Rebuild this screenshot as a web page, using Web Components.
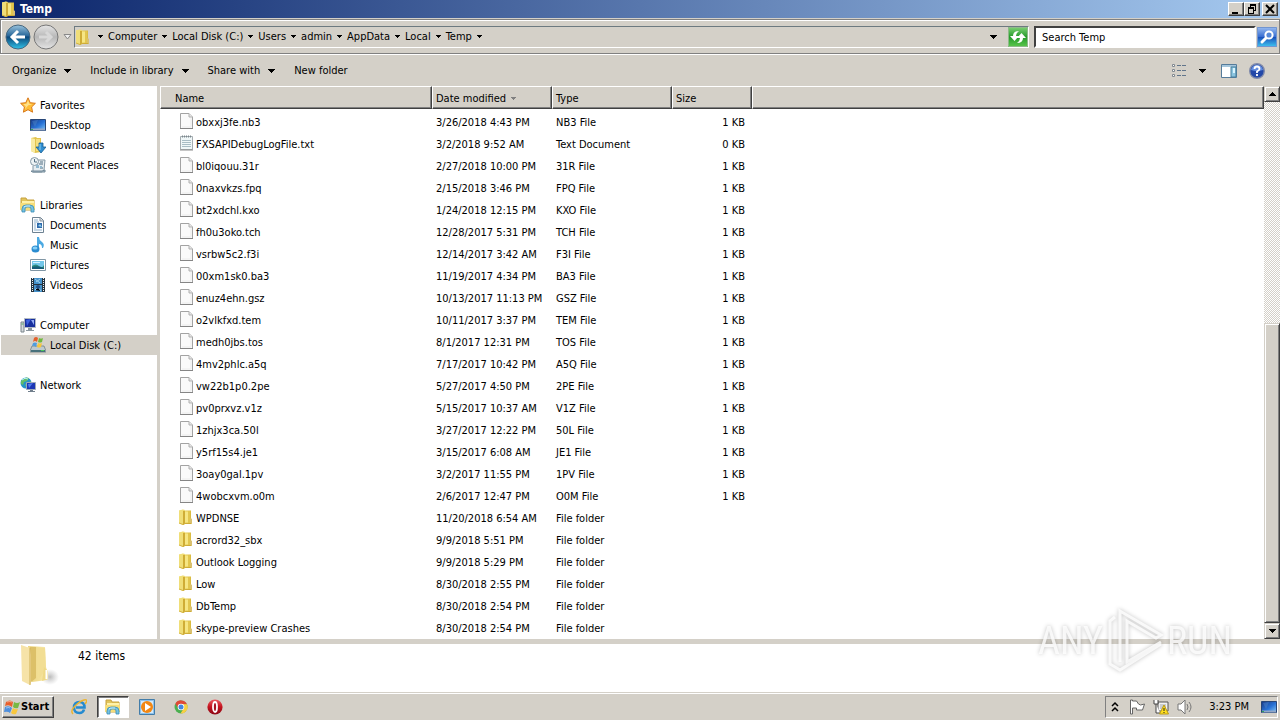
<!DOCTYPE html>
<html lang="en">
<head>
<meta charset="utf-8">
<meta name="viewport" content="width=device-width, initial-scale=1">
<title>Temp</title>
<style>
  :root {
    --face: #d4d0c8;
    --light: #ffffff;
    --shadow: #808080;
    --dark: #404040;
    --text: #000000;
  }
  body {
    margin: 0;
    font: 11px/16px Tahoma, "DejaVu Sans Condensed", "DejaVu Sans", sans-serif;
    color: var(--text);
    background: var(--face);
  }
</style>
</head>
<body>
<explorer-window>
  <title-bar slot="title" icon="folder">Temp</title-bar>
  <address-bar slot="address" path="Computer|Local Disk (C:)|Users|admin|AppData|Local|Temp"></address-bar>
  <command-bar slot="commands"></command-bar>
  <nav-pane slot="nav">
    <nav-group icon="star" label="Favorites">
      <nav-item icon="desktop">Desktop</nav-item>
      <nav-item icon="downloads">Downloads</nav-item>
      <nav-item icon="recent">Recent Places</nav-item>
    </nav-group>
    <nav-group icon="libraries" label="Libraries">
      <nav-item icon="documents">Documents</nav-item>
      <nav-item icon="music">Music</nav-item>
      <nav-item icon="pictures">Pictures</nav-item>
      <nav-item icon="videos">Videos</nav-item>
    </nav-group>
    <nav-group icon="computer" label="Computer">
      <nav-item icon="disk" selected>Local Disk (C:)</nav-item>
    </nav-group>
    <nav-group icon="network" label="Network"></nav-group>
  </nav-pane>
  <file-list slot="files"></file-list>
  <scroll-bar slot="scroll"></scroll-bar>
  <details-pane slot="details">42 items</details-pane>
</explorer-window>
<task-bar></task-bar>
<brand-mark></brand-mark>

<script>
const ICONS = {
  folder: `<defs><linearGradient id="a"><stop stop-color="#f9ec94"/><stop offset=".6" stop-color="#e6cb50"/><stop offset="1" stop-color="#d6b63c"/></linearGradient></defs>
    <path d="M1 1.500l5-1 1 1h6v8l1 1v4l-1 .5H7l-2 1-4-1.500z" fill="url(#a)"/><path d="M1 1.500l4-1v15l-4-1.500z" fill="#f0de78"/><path d="M5 2h2v12l-2 2z" fill="#cfac35"/><path d="M7 2.500h3v11H7z" fill="#f6e684"/><path d="M10 2h2v12h-2z" fill="#e2c64f"/><path d="M12 9l2 1v4l-2 .5z" fill="#d9c070"/><path d="M1 14l4 1.500L7 14.500h6" stroke="#c9a634" fill="none" stroke-width=".8"/>`,
  bigfolder: `<defs><linearGradient id="a"><stop stop-color="#ecd47d"/><stop offset="1" stop-color="#f8e9ac"/></linearGradient><radialGradient id="s"><stop stop-color="#777" stop-opacity=".5"/><stop offset="1" stop-color="#999" stop-opacity="0"/></radialGradient></defs>
    <ellipse cx="30" cy="33" rx="9" ry="8" fill="url(#s)"/><path d="M8 2l17 1 1 20 2 6-1 7-15 2z" fill="url(#a)"/><path d="M10 3h6v31l-6 5z" fill="#dcc068"/><path d="M1 1l9 3 1 7v28l-1 2-8-4z" fill="#f6e3a8"/><path d="M10 4v37" stroke="#cfae52" fill="none"/><path d="M18 4h7l1 21-7 10z" fill="#f2de94"/><path d="M24 23l4 4v8l-6 2z" fill="#efd987"/><path d="M26.500 26v9" stroke="#fff" stroke-width="2"/>`,
  file: `<path d="M2.500.5h8.500l3.500 3.500v11.500h-12z" fill="#fafafa" stroke="#a3a3a3"/><path d="M11 .5v3.500h3.500" fill="#e6e6e6" stroke="#b0b0b0"/><path d="M4 14h9V5" fill="none" stroke="#ececec"/><path d="M2 15.500h13" stroke="#858585"/>`,
  text: `<path d="M2.500 1.500h12v13h-12z" fill="#f0f7f8" stroke="#a5adb1"/><path d="M4 1.500h10" stroke="#7b878d" stroke-width="2" stroke-dasharray="1 1"/><path d="M4 5.500h9M4 7.500h9M4 9.500h9M4 11.500h9" stroke="#a9bdc5"/><path d="M2 15h13" stroke="#8d8d8d"/>`,
  star: `<path d="M8 .8l2.200 4.900 5.200.6-3.800 3.700 1 5.200L8 12.700l-4.600 2.500 1-5.200L.6 6.300l5.200-.6z" fill="#ffbd35" stroke="#d8791c"/><path d="M8 3l1.300 3.800 3 .7-4 .8-3.500 4 1-3-2.600-2 3.400-.5z" fill="#ffe18a"/>`,
  desktop: `<defs><linearGradient id="a" x2="1" y2="1"><stop stop-color="#183783"/><stop offset=".55" stop-color="#2873d7"/><stop offset="1" stop-color="#8ac9f2"/></linearGradient></defs><path d="M.5 2.500h15v11H.5z" fill="url(#a)" stroke="#274677"/><path d="M1 12.500h14" stroke="#93a7c7" stroke-width="2"/><path d="M1 12h2v1H1z" fill="#30a158"/><path d="M2 4l6-1-3 7z" fill="#5087c9" opacity=".45"/>`,
  downloads: `<path d="M1 1l5-1 1 1h4v14l-6 1-4-2z" fill="#e1c34e"/><path d="M1 1l4 1v14l-4-2z" fill="#f9eba4"/><path d="M6 2h4v12H6z" fill="#f5df81"/><path d="M9 6h4v4h3l-5 6-5-6h3z" fill="#318ed1" stroke="#186094" stroke-width=".8"/><path d="M10 7v6" stroke="#8bd1f3"/>`,
  recent: `<path d="M4 3h11l-1 10-2 2H3V9" fill="#e6edf1" stroke="#8397a4"/><path d="M1 14h11l3-1v2H2z" fill="#afc3ce" stroke="#728998"/><circle cx="4.500" cy="4.500" r="4" fill="#edf3f5" stroke="#8799a5"/><path d="M4.500 2v3h2.500M10 5h3M9 7h4M6 10h3M10 11h3" stroke="#536f82" fill="none"/><path d="M6 8h3v3H6zM10 9h2v2h-2z" fill="#93b9cf"/>`,
  libraries: `<path d="M1 3V1h5l1 2h7v10H1z" fill="#e2c45a" stroke="#c6a13e"/><path d="M2 4h12v6H2z" fill="#fff2a8"/><path d="M0 6h15v7H0z" fill="#f6dd79"/><path d="M2 15v-3q0-4 4-4h4q4 0 4 4v3h-3v-3q0-2-2-2H7q-2 0-2 2v3z" fill="#76c2e2" stroke="#378eb7" stroke-width=".8"/><path d="M4 10q1-1 3-1h3" stroke="#d1f4ff" fill="none"/>`,
  documents: `<path d="M2.500.5h8l3 3v12h-11z" fill="#fbfdff" stroke="#6e8292"/><path d="M10 .5v3.500h3" fill="#ddd" stroke="#8594a1"/><path d="M4 3h4M4 5h5M4 7h2M4 9h2M4 11h2M4 13h8" stroke="#8fb1cb"/><path d="M7 6h5v5H7z" fill="#2e6aad"/><path d="M8 9l2-2 2 3z" fill="#91d0ea"/>`,
  music: `<path d="M7 0h2q0 3 3 5t1 6h-1q0-4-3-4v6H7z" fill="#4ba9e2"/><ellipse cx="5.500" cy="12" rx="4" ry="3.500" fill="#2b8cd0"/><ellipse cx="5" cy="11" rx="2.500" ry="1.500" fill="#86d0f7"/>`,
  pictures: `<path d="M.5 2.500h15v11H.5z" fill="#fff" stroke="#8096a5"/><path d="M2 4h12v8H2z" fill="#73c6e9"/><path d="M2 9q4-3 7 0t5-1v4H2z" fill="#2a8c7c"/><path d="M2 10q6-2 12 1v1H2z" fill="#145c78"/><path d="M3 5h7v1H3z" fill="#d3f3ff"/>`,
  videos: `<path d="M1 1h14v14H1z" fill="#26333e"/><path d="M4 1h8v6H4zM4 8h8v7H4z" fill="#4591ca"/><path d="M5 2l5 4M5 13l3-3 3 4M6 5l4-3" stroke="#9fd3ef"/><path d="M2.500 1v14M13.500 1v14" stroke="#edf2f5" stroke-dasharray="1 1"/><circle cx="8" cy="10" r="2" fill="#234f85"/>`,
  computer: `<path d="M1 5h3v10H1z" fill="#d4d9dc" stroke="#7b858b"/><path d="M1.500 7h2" stroke="#51ad66"/><path d="M4.500 1.500h11v9h-11z" fill="#172f9d" stroke="#b2bac4"/><path d="M6 3l5-1-4 7z" fill="#3d61df"/><path d="M11 3h3v5z" fill="#91aaf5"/><path d="M8 11h4v2h2v1H6v-1h2z" fill="#8b969e"/>`,
  disk: `<path d="M2 9h12l2 5v1H0v-1z" fill="#bec9cd" stroke="#65777d" stroke-width=".7"/><path d="M1 13h14v2H1z" fill="#48717b"/><path d="M11 13h3v1h-3z" fill="#4bcc5a"/><path d="M4 1q2-2 4 0L7 5Q5 3 3 5z" fill="#e45f2b"/><path d="M9 1q2 1 4 0l-1 4q-2 1-4 0z" fill="#70b83c"/><path d="M3 6q2-1 4 0l-1 4q-2-2-4-1z" fill="#4d9cdf"/><path d="M8 6q2 1 4 0l-1 4q-2 1-4 0z" fill="#f7c63b"/>`,
  network: `<circle cx="6" cy="6" r="5.500" fill="#2592ca"/><path d="M1 4q4-5 8-3L7 4 4 5 3 8 1 7zM7 6l4-2v5l-4 2-2-3z" fill="#62bd67"/><path d="M2 3q3-3 6-1" stroke="#b9f0fa" fill="none"/><path d="M6.500 5.500h9v7h-9z" fill="#1d37b5" stroke="#9da9b9"/><path d="M8 7l5-1-4 5z" fill="#4f7bed"/><path d="M10 13h3v1h2v1H8v-1h2z" fill="#717f8c"/>`,
  refresh: `<defs><linearGradient id="a" y2="1" x2="0"><stop stop-color="#7fd276"/><stop offset=".5" stop-color="#259a2b"/><stop offset="1" stop-color="#5cc84d"/></linearGradient></defs><path d="M0 0h20v20H0z" fill="url(#a)"/><path d="M.5.5h19v19H.5z" fill="none" stroke="#8fb98a"/><path d="M11 4Q5 4 5 9H2l4.500 5L11 9H8q0-3 3-5zM9 16q6 0 6-5h3l-4.500-5L9 11h3q0 3-3 5z" fill="#fff"/>`,
  search: `<defs><linearGradient id="a" y2="1" x2="0"><stop stop-color="#9cbef1"/><stop offset=".48" stop-color="#386ed2"/><stop offset=".5" stop-color="#194db9"/><stop offset="1" stop-color="#40c8f2"/></linearGradient></defs><path d="M0 0h20v20H0z" fill="url(#a)"/><path d="M.5.5h19v19H.5z" fill="none" stroke="#7295cf"/><path d="M9 11l-4 4" stroke="#fff" stroke-width="3" stroke-linecap="round"/><circle cx="12" cy="8" r="3.600" fill="#5688d8" stroke="#fff" stroke-width="2"/>`,
  view: `<path d="M1.500 1.500h2v2h-2zM1.500 6.500h2v2h-2zM1.500 11.500h2v2h-2z" fill="#fff" stroke="#818990"/><path d="M6 2.500h4M11 2.500h4M6 7.500h4M11 7.500h4M6 12.500h4M11 12.500h4" stroke="#61758b"/>`,
  preview: `<path d="M.5 1.500h15v13H.5z" fill="#fff" stroke="#557b9a"/><path d="M1 2h14v2H1z" fill="#a5c6dc"/><path d="M10 4h5v10h-5z" fill="#8bc4df" stroke="#477e9c"/><path d="M12 5h2v5h-2z" fill="#d9f4ff"/>`,
  help: `<circle cx="8" cy="8" r="7.300" fill="#2348a8" stroke="#808baa" stroke-width="1.400"/><path d="M2 7Q3 2 8 2t6 5Q8 9 2 7z" fill="#658fe0"/><path d="M5.500 6Q5.500 3.500 8 3.500T10.500 6Q10.500 7 8 8.500V10M8 11v2" fill="none" stroke="#fff" stroke-width="1.800"/>`,
  windows: `<path d="M2 3q4-3 7 0L8 8Q5 5 1 7z" fill="#e85f2b"/><path d="M10 3q3 2 6 0l-2 6q-3 1-5-1z" fill="#77b943"/><path d="M1 8q4-2 7 1l-2 5Q4 12 0 13z" fill="#4e8fdd"/><path d="M9 9q3 2 5 1l-2 5q-3 1-5-1z" fill="#f8c73d"/><path d="M3 3q3-1 5 0M2 9q3-1 4 0" stroke="#fff" opacity=".45" fill="none"/>`,
  ie: `<path d="M13 10.500Q12 14 8.500 14q-5.500 0-5.500-5.500T8.500 3q5 0 5 5.500H5" fill="none" stroke="#258bd0" stroke-width="2.600"/><path d="M5 6q1-2 4-2" stroke="#8ed8fb" fill="none"/><path d="M2 15Q-1 12 4 7t9-6q5-1 1 4" fill="none" stroke="#edb42e" stroke-width="1.500"/>`,
  player: `<path d="M.5.5h15v15H.5z" fill="#8dc2ec" stroke="#437da9"/><path d="M2 2h12v12H2z" fill="#d4eafb"/><circle cx="8" cy="8" r="6" fill="#f28713"/><path d="M6 4l6 4-6 4z" fill="#fff"/>`,
  chrome: `<circle cx="8" cy="8" r="6.500" fill="#4baf50"/><path d="M2.400 4.700A6.500 6.500 0 0 1 14 5.200L8 6l-2.600 3.500z" fill="#df4937"/><path d="M14 5.200A6.500 6.500 0 0 1 7.500 14.500l3.100-5L8 5z" fill="#f8cf43"/><circle cx="8" cy="8" r="3.300" fill="#fff"/><circle cx="8" cy="8" r="2.500" fill="#4386df"/>`,
  opera: `<defs><linearGradient id="a" x2="0" y2="1"><stop stop-color="#ed5a60"/><stop offset=".5" stop-color="#c3131e"/><stop offset="1" stop-color="#8a0714"/></linearGradient></defs><circle cx="8" cy="8" r="7.600" fill="url(#a)"/><ellipse cx="8" cy="8" rx="2" ry="5" fill="#a41421" stroke="#fff" stroke-width="1.800"/>`,
  chevrons: `<path d="M5 7l3-3 3 3M5 12l3-3 3 3" fill="none" stroke="#000" stroke-width="1.500"/>`,
  flag: `<path d="M1.500 1v14h2V9h4v2h6l2-6-4 1-2-1-2-3h-4V1z" fill="#fff" stroke="#666"/>`,
  wired: `<path d="M5 3h10v9H5z" fill="#f2f2f2" stroke="#555"/><path d="M7 5h6v5H7z" fill="#c9cccf"/><path d="M1 1v4h4V1M3 5v9h4" fill="#fff" stroke="#444"/><path d="M11 6l4.500 9h-9z" fill="#ffdf1c" stroke="#b99916"/><path d="M11 9v3M11 13v1" stroke="#222"/>`,
  sound: `<path d="M1 5h3l4-4v14l-4-4H1z" fill="#fff" stroke="#777"/><path d="M10 5q2 3 0 6M12 3q4 5 0 10" fill="none" stroke="#777"/>`,
  minimize: `<path d="M3 9h6v2H3z"/>`,
  restore: `<path d="M5 1h6v7H9V7h1V3H6v1H5zM3 4h6v7H3zM4 6v4h4V6z" fill-rule="evenodd"/>`,
  close: `<path d="M3 2l8 8M11 2l-8 8" stroke="#000" stroke-width="2"/>`
};

const VIEW_BOXES = {
  bigfolder: '0 0 40 44',
  refresh: '0 0 20 20',
  search: '0 0 20 20',
  minimize: '0 0 14 12',
  restore: '0 0 14 12',
  close: '0 0 14 12'
};

class SvgIcon extends HTMLElement {
  static get observedAttributes() { return ['name']; }
  constructor() {
    super();
    this.attachShadow({ mode: 'open' });
  }
  connectedCallback() { this.render(); }
  attributeChangedCallback() { this.render(); }
  render() {
    const name = this.getAttribute('name');
    this.shadowRoot.innerHTML = `
      <style>
        :host { display: block; flex: none; width: 16px; height: 16px; }
        svg { display: block; width: 100%; height: 100%; }
      </style>
      <svg viewBox="${VIEW_BOXES[name] || '0 0 16 16'}" aria-hidden="true">${ICONS[name] || ''}</svg>`;
  }
}

// Small solid triangle, points down unless dir="up"
class ArrowGlyph extends HTMLElement {
  connectedCallback() {
    if (this.shadowRoot) return;
    const up = this.getAttribute('dir') === 'up';
    this.attachShadow({ mode: 'open' }).innerHTML = `
      <style>
        :host { display: block; flex: none; width: 7px; height: 4px; }
        :host([small]) { width: 5px; height: 3px; }
        svg { display: block; width: 100%; height: 100%; fill: currentColor; }
      </style>
      <svg viewBox="0 0 7 4" preserveAspectRatio="none" shape-rendering="crispEdges" aria-hidden="true"><path d="${up ? 'M0 4h7L3.500 0z' : 'M0 0h7L3.500 4z'}"/></svg>`;
  }
}

class ExplorerWindow extends HTMLElement {
  constructor() {
    super();
    this.attachShadow({ mode: 'open' }).innerHTML = `
      <style>
        :host { display: flex; flex-direction: column; min-height: calc(100vh - 28px); background: var(--face); }
        main { flex: 1; display: grid; grid-template-columns: 157px minmax(0, 1fr) 16px; background: #fff; }
        .files { border-left: 3px solid var(--face); }
      </style>
      <slot name="title"></slot>
      <slot name="address"></slot>
      <slot name="commands"></slot>
      <main>
        <slot name="nav"></slot>
        <div class="files"><slot name="files"></slot></div>
        <slot name="scroll"></slot>
      </main>
      <slot name="details"></slot>`;
  }
}

class TitleBar extends HTMLElement {
  constructor() {
    super();
    this.attachShadow({ mode: 'open' });
  }
  connectedCallback() {
    this.shadowRoot.innerHTML = `
      <style>
        :host {
          display: flex; align-items: center; gap: 3px; height: 18px; padding: 0 2px 0 1px;
          border-bottom: 1px solid var(--face);
          background: linear-gradient(90deg, #0a246a, #a6caf0);
          color: #fff; font-size: 12px; font-weight: bold;
        }
        h1 { flex: 1; margin: 0; font: inherit; }
        .buttons { display: flex; }
        button {
          width: 16px; height: 14px; padding: 0; overflow: hidden;
          background: var(--face); border: 1px solid; border-color: #fff var(--dark) var(--dark) #fff;
          box-shadow: inset -1px -1px var(--shadow);
        }
        button:last-child { margin-left: 2px; }
        button svg-icon { width: 14px; height: 12px; }
      </style>
      <svg-icon name="${this.getAttribute('icon')}"></svg-icon>
      <h1><slot></slot></h1>
      <div class="buttons">
        <button aria-label="Minimize"><svg-icon name="minimize"></svg-icon></button>
        <button aria-label="Restore"><svg-icon name="restore"></svg-icon></button>
        <button aria-label="Close"><svg-icon name="close"></svg-icon></button>
      </div>`;
  }
}

class AddressBar extends HTMLElement {
  constructor() {
    super();
    this.attachShadow({ mode: 'open' });
  }
  connectedCallback() {
    const crumbs = (this.getAttribute('path') || '').split('|');
    this.shadowRoot.innerHTML = `
      <style>
        :host {
          display: flex; align-items: center; height: 33px; padding: 0 2px 0 4px;
          border: 1px solid var(--shadow); margin-bottom: 1px;
          box-shadow: inset 1px 1px #fff, 0 1px #fff;
        }
        button { padding: 0; border: 0; background: none; font: inherit; color: inherit; }
        .round { flex: none; width: 26px; height: 26px; margin-right: 2px; }
        .round svg { display: block; }
        .history { display: flex; justify-content: center; width: 13px; }
        .path {
          flex: 1; display: flex; align-items: center; height: 20px; min-width: 0;
          border: 1px solid; border-color: #6d7a80 #fff #fff #6d7a80;
        }
        ol { flex: 1; display: flex; margin: 0; padding: 0 0 0 2px; list-style: none; }
        li { display: flex; align-items: center; }
        a { color: inherit; text-decoration: none; white-space: nowrap; }
        .sep { display: flex; justify-content: center; width: 15px; }
        .drop { display: flex; justify-content: center; width: 29px; }
        .tool { flex: none; width: 20px; height: 20px; }
        .tool svg-icon { width: 20px; height: 20px; }
        input {
          box-sizing: border-box; width: 222px; height: 22px; margin: 0 1px 0 5px; padding: 1px 6px 0;
          border: 2px solid; border-color: var(--dark) #fff #fff var(--dark); border-radius: 0;
          font: inherit; color: inherit; background: #fff; outline: none;
        }
        input::placeholder { color: #000; opacity: 1; }
      </style>
      <button class="round" aria-label="Back"><svg width="26" height="26" viewBox="0 0 26 26">
        <defs><linearGradient id="b" x2="0" y2="1"><stop stop-color="#9ac4dd"/><stop offset=".45" stop-color="#28679a"/><stop offset=".5" stop-color="#0b477a"/><stop offset="1" stop-color="#31c3e9"/></linearGradient></defs>
        <circle cx="13" cy="13" r="12" fill="url(#b)" stroke="#47677e"/><path d="M20 13H8M13 7l-6 6 6 6" fill="none" stroke="#fff" stroke-width="3"/></svg></button>
      <button class="round" aria-label="Forward" disabled><svg width="26" height="26" viewBox="0 0 26 26">
        <defs><linearGradient id="f" x2="0" y2="1"><stop stop-color="#e5e5e5"/><stop offset=".5" stop-color="#b7b7b7"/><stop offset="1" stop-color="#e5e5e5"/></linearGradient></defs>
        <circle cx="13" cy="13" r="12" fill="url(#f)" stroke="#777"/><path d="M6 13h12M13 8l5 5-5 5" fill="none" stroke="#d8d8d8" stroke-width="3"/></svg></button>
      <button class="history" aria-label="Recent pages"><svg width="9" height="6"><path d="M1 .5h7L4.500 5z" fill="#eee" stroke="#888"/></svg></button>
      <nav class="path" aria-label="Address">
        <svg-icon name="folder"></svg-icon>
        <ol>
          <li><span class="sep"><arrow-glyph small></arrow-glyph></span></li>
          ${crumbs.map(c => `<li><a href="#">${c}</a><span class="sep"><arrow-glyph small></arrow-glyph></span></li>`).join('')}
        </ol>
        <button class="drop" aria-label="Previous locations"><arrow-glyph></arrow-glyph></button>
        <button class="tool" aria-label="Refresh"><svg-icon name="refresh"></svg-icon></button>
      </nav>
      <input type="search" aria-label="Search Temp" placeholder="Search Temp">
      <button class="tool" aria-label="Search"><svg-icon name="search"></svg-icon></button>`;
  }
}

class CommandBar extends HTMLElement {
  constructor() {
    super();
    this.attachShadow({ mode: 'open' }).innerHTML = `
      <style>
        :host { display: flex; align-items: center; height: 31px; padding: 0 15px 0 12px; }
        .menus { flex: 1; display: flex; gap: 19px; }
        button {
          display: flex; align-items: center; gap: 8px; padding: 0; border: 0;
          background: none; font: inherit; color: inherit; white-space: nowrap;
        }
        .tools { display: flex; align-items: center; gap: 12px; }
        .view { gap: 12px; margin-right: 3px; }
      </style>
      <div class="menus">
        <button>Organize <arrow-glyph></arrow-glyph></button>
        <button>Include in library <arrow-glyph></arrow-glyph></button>
        <button>Share with <arrow-glyph></arrow-glyph></button>
        <button>New folder</button>
      </div>
      <div class="tools">
        <button class="view" aria-label="Change your view"><svg-icon name="view"></svg-icon><arrow-glyph></arrow-glyph></button>
        <button aria-label="Preview pane"><svg-icon name="preview"></svg-icon></button>
        <button aria-label="Help"><svg-icon name="help"></svg-icon></button>
      </div>`;
  }
}

class NavPane extends HTMLElement {
  constructor() {
    super();
    this.attachShadow({ mode: 'open' }).innerHTML = `
      <style>
        :host { display: block; background: #fff; }
        nav { display: flex; flex-direction: column; gap: 20px; padding: 9px 0 0 1px; }
      </style>
      <nav aria-label="Folders"><slot></slot></nav>`;
  }
}

class NavGroup extends HTMLElement {
  constructor() {
    super();
    this.attachShadow({ mode: 'open' });
  }
  connectedCallback() {
    this.shadowRoot.innerHTML = `
      <style>
        :host { display: block; }
        a { display: flex; gap: 4px; height: 18px; padding: 2px 0 0 19px; line-height: 18px; color: inherit; text-decoration: none; }
      </style>
      <a href="#"><svg-icon name="${this.getAttribute('icon')}"></svg-icon>${this.getAttribute('label')}</a>
      <slot></slot>`;
  }
}

class NavItem extends HTMLElement {
  constructor() {
    super();
    this.attachShadow({ mode: 'open' });
  }
  connectedCallback() {
    this.shadowRoot.innerHTML = `
      <style>
        :host { display: block; }
        :host([selected]) { background: var(--face); }
        a { display: flex; gap: 4px; height: 18px; padding: 2px 0 0 29px; line-height: 18px; color: inherit; text-decoration: none; }
      </style>
      <a href="#"><svg-icon name="${this.getAttribute('icon')}"></svg-icon><slot></slot></a>`;
  }
}

const FILES = [
  ['obxxj3fe.nb3', '3/26/2018 4:43 PM', 'NB3 File', '1 KB'],
  ['FXSAPIDebugLogFile.txt', '3/2/2018 9:52 AM', 'Text Document', '0 KB'],
  ['bl0iqouu.31r', '2/27/2018 10:00 PM', '31R File', '1 KB'],
  ['0naxvkzs.fpq', '2/15/2018 3:46 PM', 'FPQ File', '1 KB'],
  ['bt2xdchl.kxo', '1/24/2018 12:15 PM', 'KXO File', '1 KB'],
  ['fh0u3oko.tch', '12/28/2017 5:31 PM', 'TCH File', '1 KB'],
  ['vsrbw5c2.f3i', '12/14/2017 3:42 AM', 'F3I File', '1 KB'],
  ['00xm1sk0.ba3', '11/19/2017 4:34 PM', 'BA3 File', '1 KB'],
  ['enuz4ehn.gsz', '10/13/2017 11:13 PM', 'GSZ File', '1 KB'],
  ['o2vlkfxd.tem', '10/11/2017 3:37 PM', 'TEM File', '1 KB'],
  ['medh0jbs.tos', '8/1/2017 12:31 PM', 'TOS File', '1 KB'],
  ['4mv2phlc.a5q', '7/17/2017 10:42 PM', 'A5Q File', '1 KB'],
  ['vw22b1p0.2pe', '5/27/2017 4:50 PM', '2PE File', '1 KB'],
  ['pv0prxvz.v1z', '5/15/2017 10:37 AM', 'V1Z File', '1 KB'],
  ['1zhjx3ca.50l', '3/27/2017 12:22 PM', '50L File', '1 KB'],
  ['y5rf15s4.je1', '3/15/2017 6:08 AM', 'JE1 File', '1 KB'],
  ['3oay0gal.1pv', '3/2/2017 11:55 PM', '1PV File', '1 KB'],
  ['4wobcxvm.o0m', '2/6/2017 12:47 PM', 'O0M File', '1 KB'],
  ['WPDNSE', '11/20/2018 6:54 AM', 'File folder', ''],
  ['acrord32_sbx', '9/9/2018 5:51 PM', 'File folder', ''],
  ['Outlook Logging', '9/9/2018 5:29 PM', 'File folder', ''],
  ['Low', '8/30/2018 2:55 PM', 'File folder', ''],
  ['DbTemp', '8/30/2018 2:54 PM', 'File folder', ''],
  ['skype-preview Crashes', '8/30/2018 2:54 PM', 'File folder', '']
];

class FileList extends HTMLElement {
  constructor() {
    super();
    this.attachShadow({ mode: 'open' });
  }
  iconFor(type) {
    if (type === 'File folder') return 'folder';
    return type === 'Text Document' ? 'text' : 'file';
  }
  connectedCallback() {
    this.shadowRoot.innerHTML = `
      <style>
        :host { display: block; }
        table { width: 100%; table-layout: fixed; border-spacing: 0; }
        .name { width: 272px; }
        .date, .type { width: 120px; }
        .size { width: 80px; }
        th {
          box-sizing: border-box; height: 23px; padding: 2px 3px 0; text-align: left; font-weight: normal;
          background: var(--face); border: 1px solid;
          border-color: #fff var(--dark) var(--dark) #fff;
          box-shadow: inset -1px -1px var(--shadow);
        }
        th:first-child { padding-left: 14px; }
        .sorted { display: flex; align-items: center; gap: 5px; }
        .sorted arrow-glyph { color: var(--shadow); }
        td { box-sizing: border-box; height: 22px; padding: 2px 4px 0; line-height: 20px; white-space: nowrap; }
        td:first-child { padding-left: 18px; }
        td:nth-child(4) { padding-right: 7px; text-align: right; }
        .gap td { height: 2px; padding: 0; }
        .file { display: flex; gap: 2px; }
      </style>
      <table>
        <colgroup><col class="name"><col class="date"><col class="type"><col class="size"><col></colgroup>
        <thead><tr>
          <th>Name</th>
          <th aria-sort="descending"><span class="sorted">Date modified <arrow-glyph small></arrow-glyph></span></th>
          <th>Type</th><th>Size</th><th></th>
        </tr></thead>
        <tbody>
          <tr class="gap"><td colspan="5"></td></tr>
          ${FILES.map(([name, date, type, size]) => `
          <tr>
            <td><span class="file"><svg-icon name="${this.iconFor(type)}"></svg-icon>${name}</span></td>
            <td>${date}</td><td>${type}</td><td>${size}</td><td></td>
          </tr>`).join('')}
        </tbody>
      </table>`;
  }
}

class ScrollBar extends HTMLElement {
  constructor() {
    super();
    this.attachShadow({ mode: 'open' }).innerHTML = `
      <style>
        :host {
          display: flex; flex-direction: column;
          background: repeating-conic-gradient(var(--face) 0 25%, #fff 0 50%) 0 0 / 2px 2px;
        }
        button, .thumb {
          box-sizing: border-box; background: var(--face); border: 1px solid;
          border-color: var(--face) var(--dark) var(--dark) var(--face);
          box-shadow: inset 1px 1px #fff, inset -1px -1px var(--shadow);
        }
        button { display: flex; align-items: center; justify-content: center; height: 16px; padding: 0; color: #000; }
        .track { flex: 222; }
        .thumb { flex: 299; }
      </style>
      <button aria-label="Scroll up"><arrow-glyph dir="up"></arrow-glyph></button>
      <div class="track"></div>
      <div class="thumb"></div>
      <button aria-label="Scroll down"><arrow-glyph></arrow-glyph></button>`;
  }
}

class DetailsPane extends HTMLElement {
  constructor() {
    super();
    this.attachShadow({ mode: 'open' }).innerHTML = `
      <style>
        :host {
          display: flex; gap: 18px; height: 48px; padding-left: 20px;
          background: #fff; border-top: 5px solid var(--face);
          font-size: 12px;
        }
        svg-icon { width: 40px; height: 44px; }
        p { margin: 4px 0 0; }
      </style>
      <svg-icon name="bigfolder"></svg-icon>
      <p><slot></slot></p>`;
  }
}

class TaskBar extends HTMLElement {
  constructor() {
    super();
    this.attachShadow({ mode: 'open' }).innerHTML = `
      <style>
        :host {
          box-sizing: border-box; display: flex; align-items: center; height: 28px; padding: 1px 2px 0 2px;
          background: var(--face); border-top: 1px solid var(--face); box-shadow: inset 0 1px #fff;
        }
        button { box-sizing: border-box; display: flex; align-items: center; padding: 0; border: 0; background: none; font: inherit; color: inherit; }
        .start {
          gap: 1px; height: 22px; padding: 0 4px 0 1px; font-weight: bold; border: 1px solid;
          border-color: #fff var(--dark) var(--dark) #fff; box-shadow: inset -1px -1px var(--shadow);
        }
        .apps { flex: 1; display: flex; gap: 2px; margin-left: 9px; }
        .apps button { justify-content: center; width: 32px; height: 22px; }
        .apps .active { background: #fff; border: 1px solid; border-color: var(--dark) #fff #fff var(--dark); box-shadow: inset 1px 1px var(--shadow); }
        .tray { display: flex; align-items: center; gap: 8px; height: 20px; padding-left: 1px; border: 1px solid; border-color: var(--shadow) #fff #fff var(--shadow); }
        .tray button:first-child { margin-right: -2px; }
        time { margin: 0 4px 0 8px; }
      </style>
      <button class="start"><svg-icon name="windows"></svg-icon>Start</button>
      <div class="apps">
        <button aria-label="Internet Explorer"><svg-icon name="ie"></svg-icon></button>
        <button class="active" aria-label="Windows Explorer"><svg-icon name="libraries"></svg-icon></button>
        <button aria-label="Media Player"><svg-icon name="player"></svg-icon></button>
        <button aria-label="Chrome"><svg-icon name="chrome"></svg-icon></button>
        <button aria-label="Opera"><svg-icon name="opera"></svg-icon></button>
      </div>
      <div class="tray">
        <button aria-label="Show hidden icons"><svg-icon name="chevrons"></svg-icon></button>
        <button aria-label="Action Center"><svg-icon name="flag"></svg-icon></button>
        <button aria-label="Network"><svg-icon name="wired"></svg-icon></button>
        <button aria-label="Volume"><svg-icon name="sound"></svg-icon></button>
        <time>3:23 PM</time>
        <button aria-label="Show desktop"><svg-icon name="desktop"></svg-icon></button>
      </div>`;
  }
}

// Translucent logo floating over the lower right corner
class BrandMark extends HTMLElement {
  constructor() {
    super();
    this.attachShadow({ mode: 'open' }).innerHTML = `
      <style>
        :host {
          position: fixed; right: 48px; bottom: 46px; display: flex; align-items: center; gap: 3px;
          font: 38px/64px "Liberation Sans Narrow", "Roboto Condensed", "Liberation Sans", sans-serif;
          color: rgba(255, 255, 255, .8); pointer-events: none;
          filter: drop-shadow(0 0 2px rgba(0, 0, 0, .3));
        }
        svg { display: block; }
      </style>
      <span>ANY</span>
      <svg width="58" height="66" viewBox="0 0 58 66" fill="none" stroke="currentColor" stroke-width="3" aria-hidden="true">
        <path d="M14 44V3l41 24-5 3-29-17v41l34-20M14 44v10M9 9l-5 4v43l10 6 41-26"/>
      </svg>
      <span>RUN</span>`;
  }
}

customElements.define('svg-icon', SvgIcon);
customElements.define('arrow-glyph', ArrowGlyph);
customElements.define('explorer-window', ExplorerWindow);
customElements.define('title-bar', TitleBar);
customElements.define('address-bar', AddressBar);
customElements.define('command-bar', CommandBar);
customElements.define('nav-pane', NavPane);
customElements.define('nav-group', NavGroup);
customElements.define('nav-item', NavItem);
customElements.define('file-list', FileList);
customElements.define('scroll-bar', ScrollBar);
customElements.define('details-pane', DetailsPane);
customElements.define('task-bar', TaskBar);
customElements.define('brand-mark', BrandMark);
</script>
</body>
</html>
